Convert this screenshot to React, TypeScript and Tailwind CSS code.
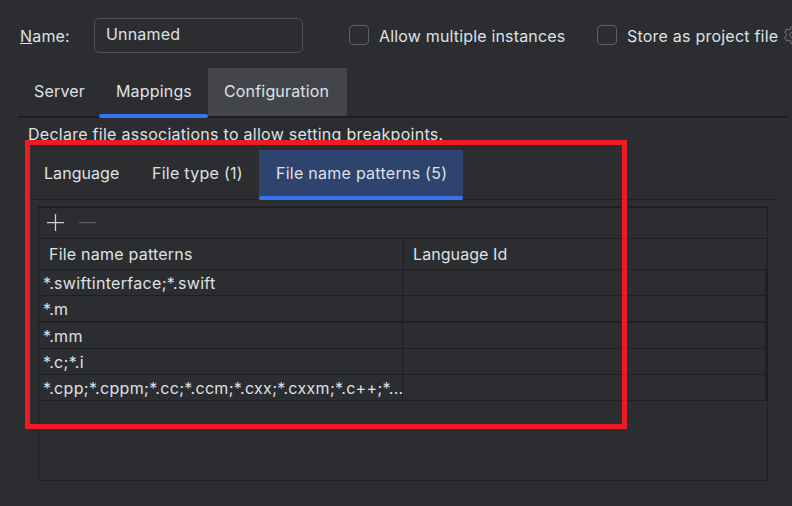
import type { ReactNode } from "react";

const patterns = [
  { text: "*.swiftinterface;*.swift", row: "h-[26px] border-b" },
  { text: "*.m", row: "h-[27px] border-b-2" },
  { text: "*.mm", row: "h-[26px] border-b" },
  { text: "*.c;*.i", row: "h-[26px] border-b" },
  { text: "*.cpp;*.cppm;*.cc;*.ccm;*.cxx;*.cxxm;*.c++;*...", row: "h-[26px] border-b" },
];

function Checkbox({ children }: { children: ReactNode }) {
  return (
    <label className="flex items-start">
      <span className="h-5 w-5 shrink-0 rounded-[4px] border border-[#5e6066]" />
      <span className="ml-[10px] mt-px">{children}</span>
    </label>
  );
}

export default function App() {
  return (
    <div className="relative h-[506px] w-[792px] overflow-hidden bg-[#2b2d30] font-['Inter',sans-serif] text-[16px] leading-[20px] tracking-[0.17px] whitespace-nowrap text-[#dfe1e5]">
      <header className="flex h-[68px] pl-5 pt-[18px]">
        <div className="w-[74px] shrink-0 pt-[8px]">
          <span className="underline decoration-1 underline-offset-[1px]">N</span>ame:
        </div>
        <div className="h-[35px] w-[209px] shrink-0 rounded-[5px] border border-[#4e5157] pl-[11px] pt-[5px]">
          Unnamed
        </div>
        <div className="ml-[46px] w-[248px] shrink-0 pt-[7px]">
          <Checkbox>Allow multiple instances</Checkbox>
        </div>
        <div className="w-[182px] shrink-0 pt-[7px] tracking-[0.22px]">
          <Checkbox>Store as project file</Checkbox>
        </div>
        <svg className="ml-[4px] mt-[7px] h-5 w-5 shrink-0" viewBox="0 0 20 20" fill="none" stroke="#63666c" strokeWidth="1.2" strokeLinejoin="round">
          <path d="M8.1 1.5h3.8l.6 2.4 1.5.9 2.4-.7 1.9 3.3-1.8 1.7v1.8l1.8 1.7-1.9 3.3-2.4-.7-1.5.9-.6 2.4H8.1l-.6-2.4-1.5-.9-2.400.700-1.900-3.300 1.800-1.700V9.100l-1.800-1.700 1.900-3.300 2.400.700 1.500-.900z" />
          <circle cx="10" cy="10" r="3" />
        </svg>
      </header>

      <nav className="ml-[18px] flex h-[50px] w-[770px] border-b-2 border-[#1e1f22]">
        <div className="w-[81px] pl-4 pt-[13px]">Server</div>
        <div className="flex h-[50px] w-[109px] flex-col justify-between pt-[13px]">
          <span className="pl-[17px]">Mappings</span>
          <span className="h-1 rounded-full bg-[#3574f0]" />
        </div>
        <div className="h-12 w-[139px] bg-[#43454a] pl-4 pt-[13px]">Configuration</div>
      </nav>

      <p className="h-8 pl-7 pt-[6px] tracking-[0.27px]">Declare file associations to allow setting breakpoints.</p>

      <nav className="ml-7 flex h-[50px] w-[750px] border-b border-[#1e1f22]">
        <div className="w-[108px] pl-4 pt-[13px] tracking-[0.05px]">Language</div>
        <div className="w-[123px] pl-4 pt-[13px] tracking-[0.27px]">File type (1)</div>
        <div className="flex h-[50px] w-[204px] flex-col justify-between bg-[#2e436e] pt-[13px] tracking-[0.26px]">
          <span className="pl-[17px]">File name patterns (5)</span>
          <span className="h-1 rounded-full bg-[#3574f0]" />
        </div>
      </nav>

      <section className="ml-[38px] mt-[6px] h-[275px] w-[730px] border border-t-2 border-[#1e1f22]">
        <div className="flex h-[31px] items-center border-b border-[#1e1f22] pl-2">
          <svg className="h-[18px] w-[50px]" viewBox="0 0 50 18" fill="none" strokeWidth="1.3">
            <path d="M0 8.600H17M8.500 0V17" stroke="#ced0d6" />
            <path d="M32 8.600H49" stroke="#5a5d63" />
          </svg>
        </div>
        <div className="flex h-[31px] items-stretch border-b border-[#1e1f22] py-px">
          <div className="w-[365px] border-r border-[#1e1f22] pl-[10px] pt-[4px] tracking-[0.22px]">File name patterns</div>
          <div className="pl-[9px] pt-[4px] tracking-[0.08px]">Language Id</div>
        </div>
        <div className="border-r-2 border-[#1e1f22]">
          {patterns.map(({ text, row }) => (
            <div key={text} className={`flex border-[#1e1f22] tracking-[0.32px] ${row}`}>
              <div className="w-[364px] shrink-0 border-r border-[#1e1f22] pl-1 pt-[3px]">{text}</div>
            </div>
          ))}
        </div>
      </section>

      <div className="absolute left-[25px] top-[140px] h-[289px] w-[602px] border-[5px] border-[#ed1c24]" />
    </div>
  );
}
